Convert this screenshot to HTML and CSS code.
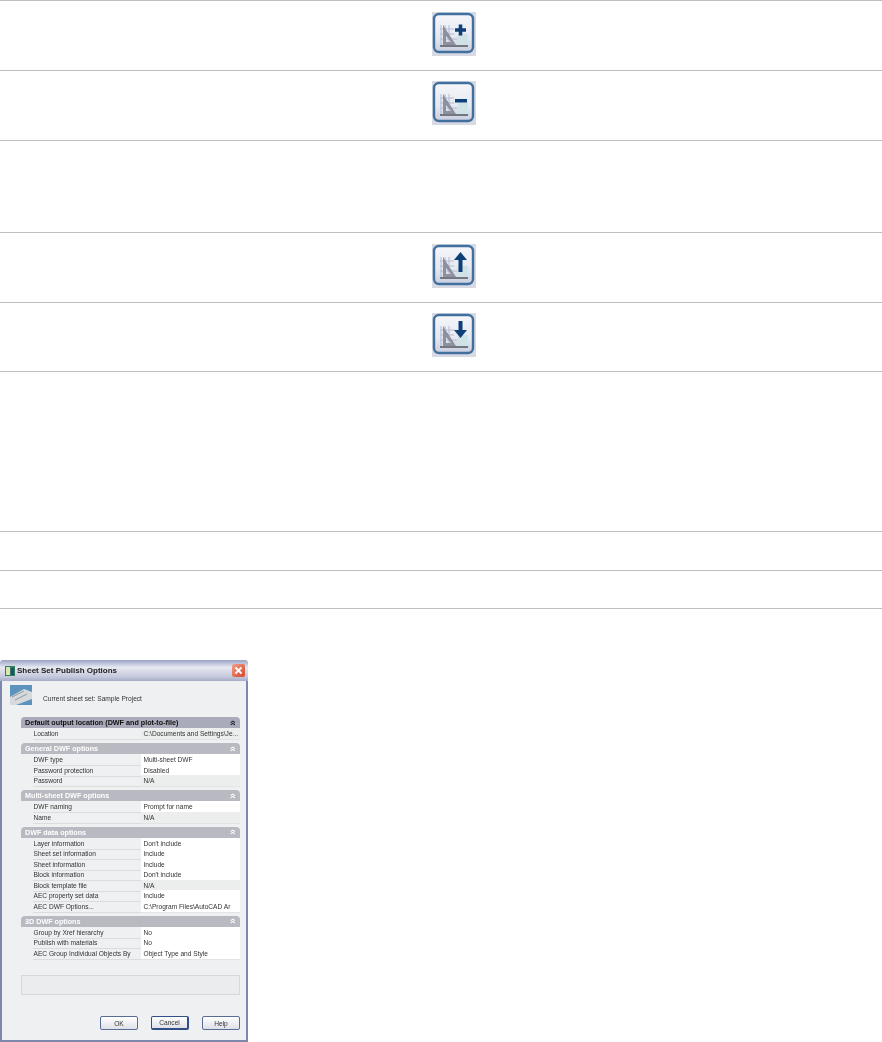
FILE: index.html
```html
<!DOCTYPE html>
<html lang="en">
<head>
    <meta charset="UTF-8">
    <title>Sheet Set Publish Options</title>
    <link rel="stylesheet" href="styles.css">
</head>

<body>
    <svg class="defs" width="0" height="0">
        <defs>
            <linearGradient id="iconFill" x1="0" y1="0" x2="0" y2="1">
                <stop offset="0" stop-color="#f4f6fa"/>
                <stop offset="0.6" stop-color="#e6e9f1"/>
                <stop offset="1" stop-color="#c9cee0"/>
            </linearGradient>
            <symbol id="iconBase" viewBox="0 0 44 44">
                <rect width="44" height="44" fill="#d8dae3"/>
                <rect x="2" y="2" width="39" height="38" rx="5" fill="url(#iconFill)" stroke="#41709f" stroke-width="2.400"/>
                <path d="M9 13v20M13 13v20M17 13v20M8 17h14M8 22h14M8 27h27" stroke="#b4bad2" stroke-width="1" fill="none"/>
                <path d="M26 22h10v11H24z" fill="#cfe2e6"/>
                <path d="M11 13v20h13z M14 24v6h5z" fill="#8d909e" fill-rule="evenodd"/>
                <rect x="8" y="33" width="28" height="2" fill="#74777f"/>
            </symbol>
        </defs>
    </svg>

    <div class="spec-rows">
        <div class="spec-row row-icon">
            <div></div>
            <svg class="tool-icon" viewBox="0 0 44 44">
                <use href="#iconBase"/>
                <path d="M23 18h11M28.500 12.500v11" stroke="#0f3f78" stroke-width="3.600"/>
            </svg>
        </div>
        <div class="spec-row row-icon icon-high">
            <div></div>
            <svg class="tool-icon" viewBox="0 0 44 44">
                <use href="#iconBase"/>
                <rect x="23" y="18" width="12" height="3.500" fill="#0f3f78"/>
            </svg>
        </div>
        <div class="spec-row row-tall"></div>
        <div class="spec-row row-icon">
            <div></div>
            <svg class="tool-icon" viewBox="0 0 44 44">
                <use href="#iconBase"/>
                <path d="M28.500 8l6.500 8h-4.500v12h-4V16H22z" fill="#0f3f78"/>
            </svg>
        </div>
        <div class="spec-row row-icon icon-high row-low">
            <div></div>
            <svg class="tool-icon" viewBox="0 0 44 44">
                <use href="#iconBase"/>
                <path d="M26.500 8h4v9H35l-6.500 8-6.500-8h4.500z" fill="#0f3f78"/>
            </svg>
        </div>
        <div class="spec-row row-taller"></div>
        <div class="spec-row row-short"></div>
        <div class="spec-row row-shorter"></div>
    </div>

    <div class="dialog">
        <div class="titlebar">
            <svg class="title-icon" viewBox="0 0 10 10">
                <rect width="10" height="10" fill="#2e7d5b"/>
                <rect x="1" y="1" width="4" height="8" fill="#d9e6b0"/>
                <rect x="6" y="2" width="3" height="7" fill="#1d4f7a"/>
            </svg>
            <span class="title-text">Sheet Set Publish Options</span>
            <span class="close-btn">
                <svg viewBox="0 0 13 13" width="13" height="13"><path d="M3.500 3.500l6 6M9.500 3.500l-6 6" stroke="#fff" stroke-width="1.800"/></svg>
            </span>
        </div>

        <div class="dialog-body">
            <div class="current-set">
                <svg class="set-icon" viewBox="0 0 22 20">
                    <rect width="22" height="20" fill="#5b93bd"/>
                    <path d="M0 12L14 4l8 3v7L6 20H0z" fill="#d6dadd"/>
                    <path d="M2 12l12-6M5 15l12-6" stroke="#8f979c" stroke-width="1"/>
                </svg>
                <span class="set-name">Current sheet set: Sample Project</span>
            </div>

            <div class="section">
                <div class="section-head active"><span>Default output location (DWF and plot-to-file)</span><span class="chev">&#xbb;</span></div>
                <div class="prop"><span class="prop-name">Location</span><span class="prop-value ro">C:\Documents and Settings\Je...</span></div>
            </div>

            <div class="section">
                <div class="section-head"><span>General DWF options</span><span class="chev">&#xbb;</span></div>
                <div class="prop"><span class="prop-name">DWF type</span><span class="prop-value">Multi-sheet DWF</span></div>
                <div class="prop"><span class="prop-name">Password protection</span><span class="prop-value">Disabled</span></div>
                <div class="prop"><span class="prop-name">Password</span><span class="prop-value ro">N/A</span></div>
            </div>

            <div class="section">
                <div class="section-head"><span>Multi-sheet DWF options</span><span class="chev">&#xbb;</span></div>
                <div class="prop"><span class="prop-name">DWF naming</span><span class="prop-value">Prompt for name</span></div>
                <div class="prop"><span class="prop-name">Name</span><span class="prop-value ro">N/A</span></div>
            </div>

            <div class="section">
                <div class="section-head"><span>DWF data options</span><span class="chev">&#xbb;</span></div>
                <div class="prop"><span class="prop-name">Layer information</span><span class="prop-value">Don't include</span></div>
                <div class="prop"><span class="prop-name">Sheet set information</span><span class="prop-value">Include</span></div>
                <div class="prop"><span class="prop-name">Sheet information</span><span class="prop-value">Include</span></div>
                <div class="prop"><span class="prop-name">Block information</span><span class="prop-value">Don't include</span></div>
                <div class="prop"><span class="prop-name">Block template file</span><span class="prop-value ro">N/A</span></div>
                <div class="prop"><span class="prop-name">AEC property set data</span><span class="prop-value">Include</span></div>
                <div class="prop"><span class="prop-name">AEC DWF Options...</span><span class="prop-value">C:\Program Files\AutoCAD Ar</span></div>
            </div>

            <div class="section">
                <div class="section-head"><span>3D DWF options</span><span class="chev">&#xbb;</span></div>
                <div class="prop"><span class="prop-name">Group by Xref hierarchy</span><span class="prop-value">No</span></div>
                <div class="prop"><span class="prop-name">Publish with materials</span><span class="prop-value">No</span></div>
                <div class="prop"><span class="prop-name">AEC Group Individual Objects By</span><span class="prop-value">Object Type and Style</span></div>
            </div>

            <div class="help-box"></div>

            <div class="buttons">
                <button class="btn">OK</button>
                <button class="btn btn-focus">Cancel</button>
                <button class="btn">Help</button>
            </div>
        </div>
    </div>
</body>

</html>
```

FILE: styles.css
```css
/* General styles */
body {
    margin: 0;
    padding: 0;
    background-color: #fff;
    font-family: "Liberation Sans", Arial, sans-serif;
    color: #333;
    overflow: hidden;
}

.defs {
    display: block;
}

/* Table rows at the top */
.spec-rows {
    border-top: 1px solid #bdbdbd;
}

.spec-row {
    border-bottom: 1px solid #bdbdbd;
    box-sizing: border-box;
}

.row-icon {
    display: grid;
    grid-template-columns: 432px 44px;
    height: 70px;
    padding-top: 11px;
}

.row-icon.icon-high {
    padding-top: 10px;
}

.row-icon.row-low {
    height: 69px;
}

.row-tall {
    height: 92px;
}

.row-taller {
    height: 160px;
}

.row-short {
    height: 39px;
}

.row-shorter {
    height: 38px;
}

.tool-icon {
    width: 44px;
    height: 44px;
    filter: blur(0.7px);
}

/* Dialog */
.dialog {
    box-sizing: border-box;
    width: 248px;
    height: 382px;
    margin-top: 51px;
    background-color: #eff0f2;
    border: 2px solid #7c88ad;
    border-top: none;
    border-radius: 4px 4px 0 0;
    filter: blur(0.4px);
}

.titlebar {
    display: flex;
    align-items: center;
    height: 21px;
    margin: 0 -2px;
    padding: 0 3px 0 5px;
    background: linear-gradient(#9aa3c4, #e6e8f2 35%, #c4c8dc 80%, #a6adc8);
    border-radius: 4px 4px 0 0;
}

.title-icon {
    width: 10px;
    height: 10px;
    margin-right: 2px;
}

.title-text {
    flex: 1;
    font-size: 8px;
    font-weight: bold;
    color: #222;
}

.close-btn {
    display: flex;
    width: 13px;
    height: 13px;
    background: linear-gradient(135deg, #f0a08a, #d8452c);
    border-radius: 2px;
}

.dialog-body {
    padding: 0 6px 0 19px;
    font-size: 6.6px;
}

.current-set {
    display: flex;
    align-items: flex-start;
    height: 36px;
    margin-left: -11px;
    padding-top: 4px;
    box-sizing: border-box;
}

.set-icon {
    width: 22px;
    height: 20px;
    margin-right: 11px;
}

.set-name {
    margin-top: 10px;
}

/* Property sections */
.section {
    margin-bottom: 4.5px;
}

.section-head {
    display: flex;
    justify-content: space-between;
    align-items: center;
    height: 11px;
    padding: 0 4px;
    font-weight: bold;
    font-size: 7.200px;
    color: #fff;
    background-color: #b9b9c2;
    border-radius: 4px 4px 0 0;
}

.section-head.active {
    color: #111;
    background-color: #a9abbb;
}

.chev {
    display: block;
    transform: rotate(-90deg);
    font-size: 10px;
    line-height: 8px;
}

.prop {
    display: grid;
    grid-template-columns: 108px 1fr;
    height: 10.5px;
    margin-left: 11.5px;
    line-height: 11px;
    color: #333;
}

.prop-name {
    padding-left: 1px;
    white-space: nowrap;
    border-bottom: 1px solid #dcdcdc;
    box-sizing: border-box;
}

.prop-value {
    padding-left: 3px;
    white-space: nowrap;
    overflow: hidden;
    background-color: #fff;
    border-bottom: 1px solid #e4e4e4;
    box-sizing: border-box;
}

.prop-value.ro {
    background-color: #eceded;
}

.help-box {
    height: 20px;
    margin-top: 17px;
    background-color: #ebeced;
    border: 1px solid #d8d8d8;
    box-sizing: border-box;
}

/* Buttons */
.buttons {
    display: flex;
    justify-content: flex-end;
    gap: 13px;
    margin-top: 21px;
}

.btn {
    box-sizing: border-box;
    width: 38px;
    height: 14px;
    padding: 0;
    font-size: 6.6px;
    font-family: "Liberation Sans", Arial, sans-serif;
    color: #333;
    background: linear-gradient(#fff, #dfe1e8);
    border: 1px solid #5a6c96;
    border-radius: 2px;
}

.btn-focus {
    border-color: #2f4f86;
    border-right-width: 2px;
    border-bottom-width: 2px;
}
```
